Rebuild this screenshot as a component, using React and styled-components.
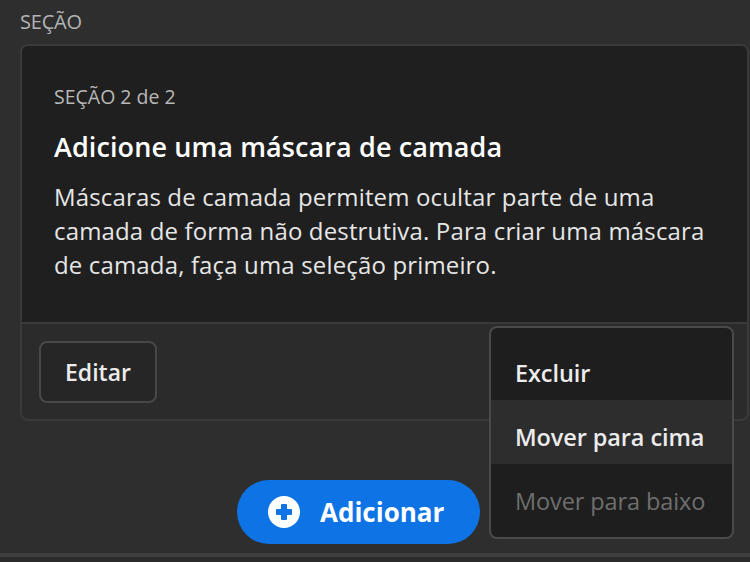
import React from "react";
import styled, { createGlobalStyle } from "styled-components";

const Global = createGlobalStyle`
  html, body { margin: 0; padding: 0; background: #2e2e2e; }
  body { font-family: "Open Sans", "Noto Sans", sans-serif; -webkit-font-smoothing: antialiased; }
  * { box-sizing: border-box; }
`;

const Page = styled.div`
  position: relative;
  width: 750px;
  height: 562px;
  overflow: hidden;
  background: #2e2e2e;
  display: flex;
  flex-direction: column;
`;

const Main = styled.div`
  flex: 1;
  display: flex;
  flex-direction: column;
  padding: 0 1px 0 20px;
`;

const SectionLabel = styled.div`
  height: 44px;
  padding-top: 8px;
  font-size: 20px;
  line-height: 28px;
  color: #b4b4b4;
  letter-spacing: -0.2px;
`;

const Card = styled.div`
  border: 2px solid #3a3a3a;
  border-radius: 8px;
  overflow: hidden;
  background: #2b2b2b;
`;

const CardBody = styled.div`
  background: #1f1f1f;
  padding: 37px 32px 30px;
  height: 276px;
`;

const Eyebrow = styled.div`
  font-size: 19.5px;
  line-height: 28px;
  color: #b8b8b8;
`;

const Title = styled.h2`
  margin: 18px 0 0;
  font-size: 27px;
  line-height: 36px;
  font-weight: 600;
  color: #ffffff;
  letter-spacing: 0.1px;
`;

const Body = styled.p`
  margin: 15px 0 0;
  max-width: 662px;
  font-size: 24px;
  line-height: 34px;
  color: #e6e6e6;
  letter-spacing: 0.15px;
`;

const CardFooter = styled.div`
  border-top: 2px solid #3a3a3a;
  padding: 17px 17px;
  height: 97px;
`;

const OutlineButton = styled.button`
  height: 62px;
  padding: 0 24px;
  border: 2px solid #484848;
  border-radius: 8px;
  background: #262626;
  color: #ececec;
  font-family: inherit;
  font-size: 23px;
  font-weight: 600;
`;

const ActionRow = styled.div`
  flex: 1;
  display: flex;
  align-items: flex-start;
  padding: 59px 0 0 217px;
`;

const PrimaryButton = styled.button`
  height: 64px;
  display: flex;
  align-items: center;
  gap: 20px;
  padding: 0 36px 0 31px;
  border: none;
  border-radius: 32px;
  background: #0e74e6;
  color: #fff;
  font-family: inherit;
  font-size: 26px;
  font-weight: 700;
`;

const BottomBar = styled.div`
  height: 9px;
  border-top: 4px solid #3e3e3e;
  background: #2b2b2b;
`;

const Menu = styled.div`
  position: absolute;
  left: 489px;
  top: 326px;
  width: 245px;
  height: 213px;
  border: 2px solid #4a4a4a;
  border-radius: 8px;
  background: #1e1e1e;
  padding: 8px 0 0;
  display: flex;
  flex-direction: column;
  overflow: hidden;
`;

const MenuItem = styled.div`
  height: 64px;
  flex: none;
  display: flex;
  align-items: center;
  padding: 9px 24px 0;
  white-space: nowrap;
  font-size: 23.5px;
  letter-spacing: -0.1px;
  font-weight: ${(p) => (p.$disabled ? 400 : 600)};
  color: ${(p) => (p.$disabled ? "#6e6e6e" : "#ececec")};
  background: ${(p) => (p.$active ? "#2d2d2d" : "transparent")};
`;

const PlusIcon = () => (
  <svg width="32" height="32" viewBox="0 0 32 32">
    <circle cx="16" cy="16" r="16" fill="#fff" />
    <rect x="8" y="13" width="16" height="6" rx="1" fill="#0e74e6" />
    <rect x="13" y="8" width="6" height="16" rx="1" fill="#0e74e6" />
  </svg>
);

export default function App() {
  return (
    <>
      <Global />
      <Page>
        <Main>
          <SectionLabel>SEÇÃO</SectionLabel>
          <Card>
            <CardBody>
              <Eyebrow>SEÇÃO 2 de 2</Eyebrow>
              <Title>Adicione uma máscara de camada</Title>
              <Body>
                Máscaras de camada permitem ocultar parte de uma camada de forma não destrutiva. Para criar uma máscara de camada, faça uma seleção primeiro.
              </Body>
            </CardBody>
            <CardFooter>
              <OutlineButton>Editar</OutlineButton>
            </CardFooter>
          </Card>
          <ActionRow>
            <PrimaryButton>
              <PlusIcon />
              Adicionar
            </PrimaryButton>
          </ActionRow>
        </Main>
        <BottomBar />
        <Menu>
          <MenuItem>Excluir</MenuItem>
          <MenuItem $active>Mover para cima</MenuItem>
          <MenuItem $disabled>Mover para baixo</MenuItem>
        </Menu>
      </Page>
    </>
  );
}
